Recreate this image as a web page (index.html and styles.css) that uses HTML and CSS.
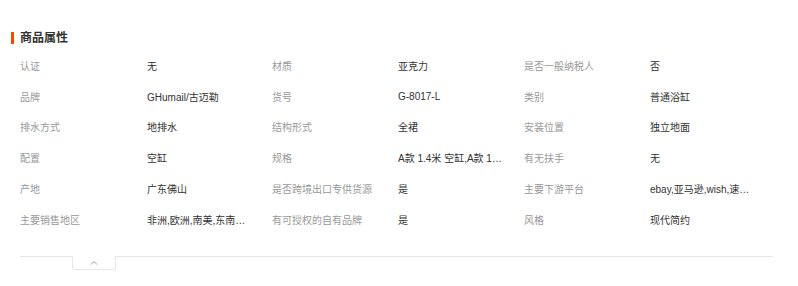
FILE: index.html
```html
<!DOCTYPE html>
<html lang="zh">
<head>
<meta charset="utf-8">
<link rel="stylesheet" href="styles.css">
</head>
<body>
<div class="panel">
  <h2 class="title">商品属性</h2>
  <div class="grid">
    <div class="k">认证</div><div class="v">无</div>
    <div class="k">材质</div><div class="v">亚克力</div>
    <div class="k">是否一般纳税人</div><div class="v">否</div>

    <div class="k">品牌</div><div class="v">GHumail/古迈勒</div>
    <div class="k">货号</div><div class="v">G-8017-L</div>
    <div class="k">类别</div><div class="v">普通浴缸</div>

    <div class="k">排水方式</div><div class="v">地排水</div>
    <div class="k">结构形式</div><div class="v">全裙</div>
    <div class="k">安装位置</div><div class="v">独立地面</div>

    <div class="k">配置</div><div class="v">空缸</div>
    <div class="k">规格</div><div class="v">A款 1.4米 空缸,A款 1.5米 空缸</div>
    <div class="k">有无扶手</div><div class="v">无</div>

    <div class="k">产地</div><div class="v">广东佛山</div>
    <div class="k">是否跨境出口专供货源</div><div class="v">是</div>
    <div class="k">主要下游平台</div><div class="v">ebay,亚马逊,wish,速卖通</div>

    <div class="k">主要销售地区</div><div class="v">非洲,欧洲,南美,东南亚,北美</div>
    <div class="k">有可授权的自有品牌</div><div class="v">是</div>
    <div class="k">风格</div><div class="v">现代简约</div>
  </div>
  <div class="foot">
    <div class="tab"><svg class="caret" width="8" height="5" viewBox="0 0 8 5"><path d="M1 4.5 L4 1.5 L7 4.5" fill="none" stroke="#999" stroke-width="1"/></svg></div>
  </div>
</div>
</body>
</html>
```

FILE: styles.css
```css
* { box-sizing: border-box; }
html, body { margin: 0; padding: 0; background: #fff; }
body {
  font-family: "Liberation Sans", "Noto Sans CJK SC", sans-serif;
  color: #333;
}
.panel {
  padding: 31px 25px 0 20px;
}
.title {
  position: relative;
  margin: 0;
  font-size: 12px;
  line-height: 14px;
  font-weight: bold;
  color: #333;
  height: 14px;
}
.title::before {
  content: "";
  position: absolute;
  left: -9px;
  top: 1px;
  width: 3px;
  height: 12px;
  background: #ff4400;
}
.grid {
  display: grid;
  grid-template-columns: 127px 125px 126px 126px 126px 123px;
  grid-auto-rows: 30.8px;
  margin-top: 5px;
  font-size: 10px;
  align-items: center;
}
.k {
  color: #999;
  white-space: nowrap;
  overflow: hidden;
}
.v {
  color: #333;
  white-space: nowrap;
  overflow: hidden;
  text-overflow: ellipsis;
  max-width: 106px;
}
.foot {
  margin-top: 21px;
  border-top: 1px solid #e6e6e6;
  width: 753px;
  height: 30px;
}
.tab {
  margin-left: 52px;
  margin-top: -1px;
  width: 44px;
  height: 14px;
  border: 1px solid #e6e6e6;
  border-top: 1px solid #fff;
  border-radius: 0 0 3px 3px;
  background: #fff;
  display: flex;
  justify-content: center;
  padding-top: 3px;
}
.caret { display: block; }
```
